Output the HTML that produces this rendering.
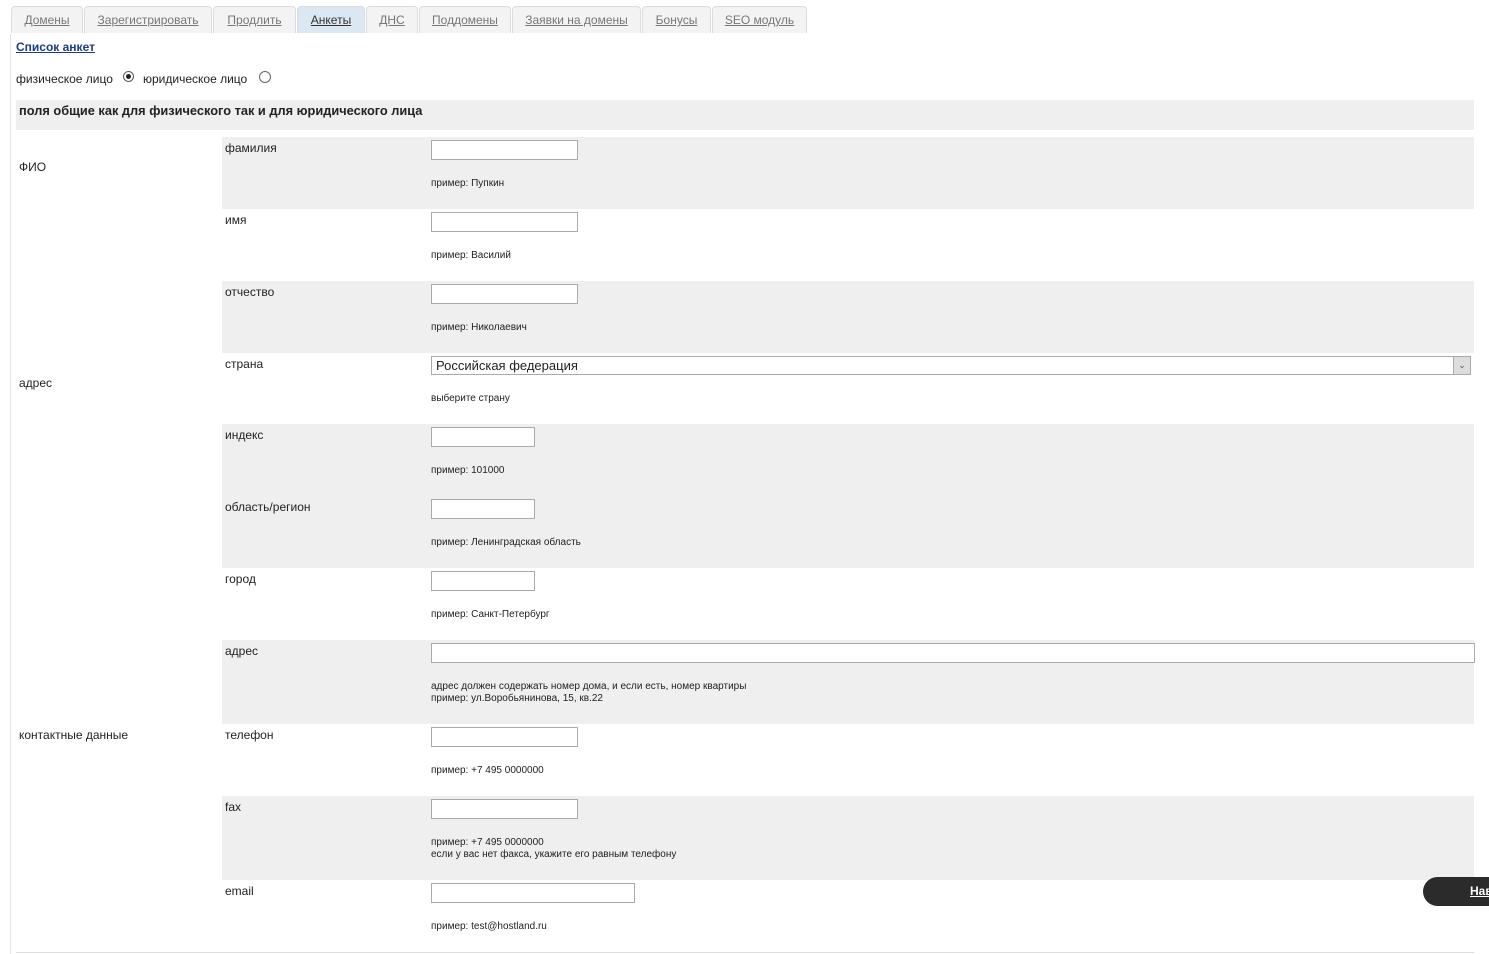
<!DOCTYPE html>
<html><head><meta charset="utf-8"><style>
body{margin:0;width:1489px;height:954px;background:#fff;font-family:"Liberation Sans","DejaVu Sans",sans-serif;font-size:12px;color:#222;position:relative;overflow:hidden}
.a{position:absolute}
.tab{position:absolute;top:6px;height:27px;border:1px solid #dcdcdc;border-bottom:none;border-radius:4px 4px 0 0;background:#f3f3f3;box-sizing:border-box;text-align:center;line-height:26px;color:#777;text-decoration:underline;font-size:12px}
.g{position:absolute;left:222px;width:1252px;background:#efefef}
.lb{position:absolute;left:225px;font-size:12px;color:#222}
.in{position:absolute;left:431px;width:147px;height:20px;border:1px solid #aaa;box-sizing:border-box;background:#fff}
.h{position:absolute;left:431px;font-size:10px;color:#222;line-height:12px}
.sec{position:absolute;left:19px;font-size:12px}
</style></head><body>
<div class="a" style="left:10px;top:34px;width:1px;height:920px;background:#e4e4e4"></div>
<div class="a" style="left:16px;top:952px;width:1458px;height:1px;background:#ddd"></div>
<div class="tab" style="left:11px;width:72px">Домены</div>
<div class="tab" style="left:84px;width:128px">Зарегистрировать</div>
<div class="tab" style="left:213px;width:83px">Продлить</div>
<div class="tab" style="left:297px;width:68px;background:#dbe7f2;color:#333">Анкеты</div>
<div class="tab" style="left:366px;width:52px">ДНС</div>
<div class="tab" style="left:419px;width:92px">Поддомены</div>
<div class="tab" style="left:512px;width:129px">Заявки на домены</div>
<div class="tab" style="left:642px;width:69px">Бонусы</div>
<div class="tab" style="left:712px;width:95px">SEO модуль</div>
<div class="a" style="left:16px;top:40px;font-weight:bold;color:#1f3d7a;text-decoration:underline">Список анкет</div>
<div class="a" style="left:16px;top:72px">физическое лицо</div>
<div class="a" style="left:123px;top:71px;width:11px;height:11px;border:1px solid #555;border-radius:50%;box-sizing:border-box"><div style="margin:2px;width:5px;height:5px;border-radius:50%;background:#222"></div></div>
<div class="a" style="left:143px;top:72px">юридическое лицо</div>
<div class="a" style="left:259px;top:71px;width:12px;height:12px;border:1px solid #666;border-radius:50%;box-sizing:border-box"></div>
<div class="a" style="left:16px;top:100px;width:1458px;height:30px;background:#efefef"></div>
<div class="a" style="left:19px;top:103px;font-weight:bold;font-size:12.8px">поля общие как для физического так и для юридического лица</div>

<div class="g" style="top:137px;height:72px"></div>
<div class="g" style="top:281px;height:72px"></div>
<div class="g" style="top:424px;height:144px"></div>
<div class="g" style="top:640px;height:84px"></div>
<div class="g" style="top:796px;height:84px"></div>

<div class="sec" style="top:160px">ФИО</div>
<div class="sec" style="top:376px">адрес</div>
<div class="sec" style="top:728px">контактные данные</div>

<div class="lb" style="top:141px">фамилия</div><div class="in" style="top:140px"></div><div class="h" style="top:178px">пример: Пупкин</div>
<div class="lb" style="top:213px">имя</div><div class="in" style="top:212px"></div><div class="h" style="top:250px">пример: Василий</div>
<div class="lb" style="top:285px">отчество</div><div class="in" style="top:284px"></div><div class="h" style="top:322px">пример: Николаевич</div>
<div class="lb" style="top:357px">страна</div>
<div class="a" style="left:431px;top:356px;width:1040px;height:19px;border:1px solid #aaa;box-sizing:border-box;font-size:13px;line-height:17px;padding-left:4px">Российская федерация<div style="position:absolute;right:0;top:0;width:16px;height:17px;background:#ddd;border-left:1px solid #aaa;text-align:center;font-size:9px;line-height:17px;color:#555">&#8964;</div></div>
<div class="h" style="top:393px">выберите страну</div>
<div class="lb" style="top:428px">индекс</div><div class="in" style="top:427px;width:104px"></div><div class="h" style="top:465px">пример: 101000</div>
<div class="lb" style="top:500px">область/регион</div><div class="in" style="top:499px;width:104px"></div><div class="h" style="top:537px">пример: Ленинградская область</div>
<div class="lb" style="top:572px">город</div><div class="in" style="top:571px;width:104px"></div><div class="h" style="top:609px">пример: Санкт-Петербург</div>
<div class="lb" style="top:644px">адрес</div><div class="in" style="top:643px;width:1044px"></div><div class="h" style="top:681px">адрес должен содержать номер дома, и если есть, номер квартиры<br>пример: ул.Воробьянинова, 15, кв.22</div>
<div class="lb" style="top:728px">телефон</div><div class="in" style="top:727px"></div><div class="h" style="top:765px">пример: +7 495 0000000</div>
<div class="lb" style="top:800px">fax</div><div class="in" style="top:799px"></div><div class="h" style="top:837px">пример: +7 495 0000000<br>если у вас нет факса, укажите его равным телефону</div>
<div class="lb" style="top:884px">email</div><div class="in" style="top:883px;width:204px"></div><div class="h" style="top:921px">пример: test@hostland.ru</div>

<div class="a" style="left:1423px;top:877px;width:80px;height:29px;background:#2b2b2b;border-radius:15px;color:#fff;font-weight:bold;text-decoration:underline;line-height:29px;padding-left:47px;box-sizing:border-box">Нав</div>
</body></html>
